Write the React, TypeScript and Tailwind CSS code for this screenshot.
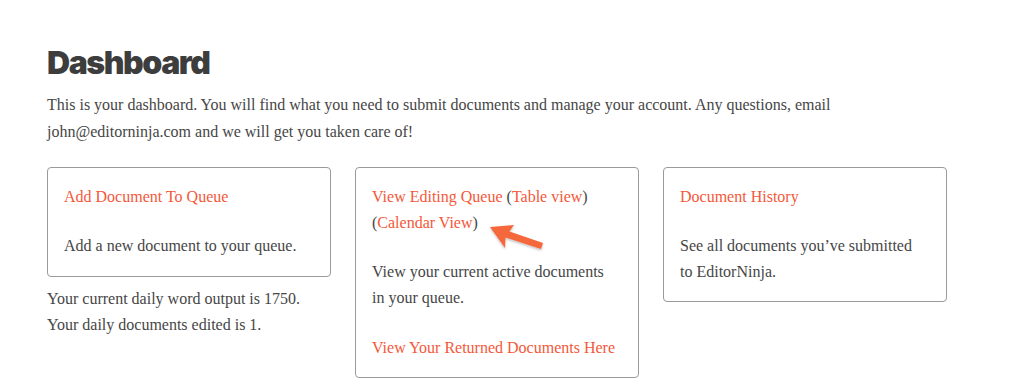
import React from 'react';

const serif = { fontFamily: '"Liberation Serif", "Times New Roman", serif' };

function Link({ children }: { children: React.ReactNode }) {
  return <a className="text-[#f4583a] cursor-pointer">{children}</a>;
}

function Card({ children, className = '' }: { children: React.ReactNode; className?: string }) {
  return (
    <div className={`border border-[#9a9a9a] rounded-[4px] pl-4 pr-[26px] pt-[16px] pb-4 ${className}`}>
      {children}
    </div>
  );
}

function Arrow() {
  return (
    <svg className="absolute left-[486px] top-[220px]" width="62" height="34" viewBox="0 0 62 34">
      <defs>
        <filter id="sh" x="-20%" y="-20%" width="150%" height="160%">
          <feDropShadow dx="0" dy="1.5" stdDeviation="1.2" floodColor="#000" floodOpacity="0.25" />
        </filter>
      </defs>
      <polygon
        points="4,7 28,5 23.5,11.5 57,23 55,29 19.5,17.5 19,28"
        fill="#f5673a"
        filter="url(#sh)"
      />
    </svg>
  );
}

export default function App() {
  return (
    <div className="relative w-[1024px] h-[388px] bg-white overflow-hidden text-[#464646]" style={serif}>
      <div className="px-[47px] pt-[45px]">
        <h1
          className="text-[32px] leading-[36px] font-black tracking-[-0.045em] text-[#3d3d3d]"
          style={{ fontFamily: 'Inter, "Liberation Sans", sans-serif' }}
        >
          Dashboard
        </h1>
        <p className="mt-[10px] text-[16px] leading-[27px] w-[800px]">
          This is your dashboard. You will find what you need to submit documents and manage your account. Any questions, email john@editorninja.com and we will get you taken care of!
        </p>

        <div className="mt-[22px] flex items-start gap-[24px] text-[16px] leading-[26px]">
          <div className="w-[284px]">
            <Card className="pb-[17px]">
              <p><Link>Add Document To Queue</Link></p>
              <p className="mt-[23px]">Add a new document to your queue.</p>
            </Card>
            <p className="mt-[9px]">Your current daily word output is 1750.</p>
            <p>Your daily documents edited is 1.</p>
          </div>

          <Card className="w-[284px]">
            <p>
              <Link>View Editing Queue</Link> (<Link>Table view</Link>)
              <br />
              (<Link>Calendar View</Link>)
            </p>
            <p className="mt-[23px]">View your current active documents in your queue.</p>
            <p className="mt-[24px] whitespace-nowrap"><Link>View Your Returned Documents Here</Link></p>
          </Card>

          <Card className="w-[284px]">
            <p><Link>Document History</Link></p>
            <p className="mt-[23px]">See all documents you’ve submitted to EditorNinja.</p>
          </Card>
        </div>
      </div>
      <Arrow />
    </div>
  );
}
